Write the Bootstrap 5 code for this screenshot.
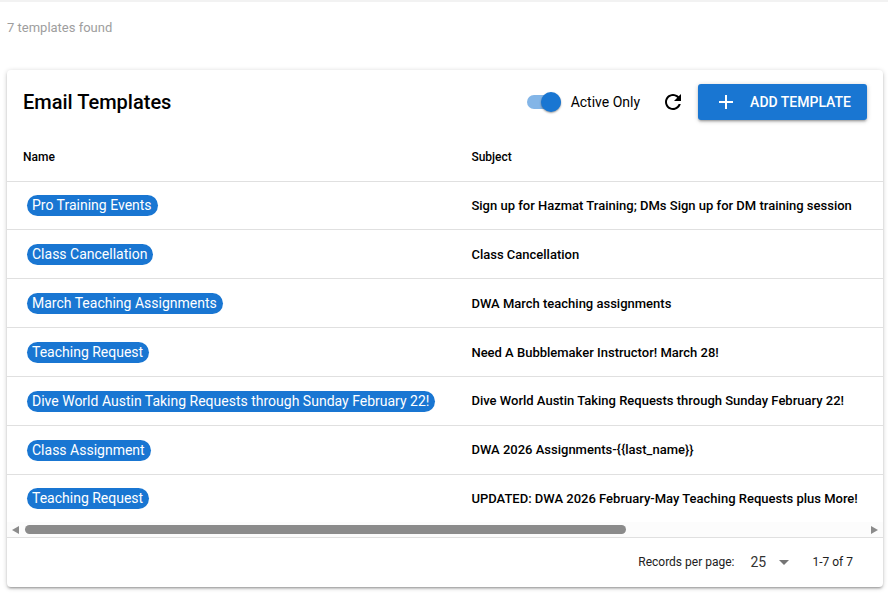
<!DOCTYPE html>
<html lang="en">
<head>
<meta charset="utf-8">
<meta name="viewport" content="width=device-width, initial-scale=1">
<title>Email Templates</title>
<link href="https://cdn.jsdelivr.net/npm/bootstrap@5.3.0/dist/css/bootstrap.min.css" rel="stylesheet">
<style>
:root { --brand: #1976d2; --line: #e0e0e0; }
body { font-family: Roboto, "Liberation Sans", sans-serif; font-size: 14px; line-height: 21px; color: #000; border-top: 2px solid #f2f2f2; }
.found-count { font-size: 13px; line-height: 20px; color: #9e9e9e; padding: 16px 7px 32px; }
.panel { margin: 0 5px 7px 7px; background: #fff; border-radius: 4px; box-shadow: 0 1px 5px rgba(0,0,0,.2), 0 2px 2px rgba(0,0,0,.14), 0 3px 1px -2px rgba(0,0,0,.12); }
.panel-head { padding: 14px 16px; }
.panel-title { font-size: 20px; line-height: 32px; font-weight: 500; }
.active-switch { min-height: 0; margin: 0; padding: 0; gap: 10px; }
.form-switch .switch-input { position: relative; appearance: none; width: 34px; height: 20px; margin: 0; float: none; border: 0; background: none !important; }
.switch-input::before, .switch-input::after { content: ""; position: absolute; background: var(--brand); }
.switch-input::before { left: 0; top: 3px; width: 34px; height: 14px; border-radius: 7px; opacity: .54; }
.switch-input::after { right: 0; top: 0; width: 20px; height: 20px; border-radius: 50%; box-shadow: 0 1px 2px rgba(0,0,0,.4); }
.switch-input:not(:checked)::after { right: 14px; background: #fff; }
.refresh-btn { margin: 0 13px 0 21px; }
.add-btn { --bs-btn-bg: var(--brand); --bs-btn-border-color: var(--brand); height: 36px; padding: 0 16px; gap: 12px; font-size: 14px; font-weight: 500; border: 0; border-radius: 3px; box-shadow: 0 1px 5px rgba(0,0,0,.2), 0 2px 2px rgba(0,0,0,.14), 0 3px 1px -2px rgba(0,0,0,.12); }
.template-table { --bs-table-color: #000; --bs-table-bg: transparent; height: 388px; border-color: var(--line); white-space: nowrap; }
.template-table th, .template-table td { padding: 0 16px; }
.template-table th { font-size: 12px; font-weight: 500; height: 47px; vertical-align: middle; }
.template-table th:first-child { width: 1%; }
.template-table td { font-size: 13px; font-weight: 500; }
.template-table tbody tr:last-child td { border-bottom: 0; }
.chip { display: inline-block; margin: 0 4px; padding: 0 6px 0 5px; border-radius: 11px; background: var(--brand); color: #fff; font-size: 14px; font-weight: 400; line-height: 21px; vertical-align: middle; }
.scroll-strip { height: 15px; padding: 0 5px; background: #fcfcfc; color: #8b8b8b; }
.scroll-track { margin: 0 6px; }
.scroll-thumb { width: 71.6%; height: 9px; border-radius: 5px; background: #8b8b8b; }
.panel-foot { border-top: 1px solid var(--line); min-height: 50px; padding: 0 30px; font-size: 12px; color: #212121; }
.page-size { width: 39px; height: 22px; padding: 0 18px 2px 0; margin: 0 23px 0 16px; border: 0; appearance: none; font-size: 14px; line-height: 20px; color: #333; background: url("data:image/svg+xml,%3Csvg xmlns='http://www.w3.org/2000/svg' viewBox='0 0 10 5'%3E%3Cpath fill='%23757575' d='M0 0h10L5 5z'/%3E%3C/svg%3E") no-repeat right 0 center / 10px 5px; }
</style>
<script src="https://cdn.jsdelivr.net/npm/bootstrap@5.3.0/dist/js/bootstrap.bundle.min.js"></script>
</head>
<body>
<main>
  <div class="found-count">7 templates found</div>
  <section class="panel">
    <header class="panel-head d-flex align-items-center flex-wrap">
      <h1 class="panel-title m-0 me-auto">Email Templates</h1>
      <div class="active-switch form-check form-switch d-flex align-items-center">
        <input class="switch-input form-check-input" type="checkbox" role="switch" id="activeOnly" checked>
        <label for="activeOnly">Active Only</label>
      </div>
      <button class="refresh-btn btn p-0 border-0 d-flex" type="button" aria-label="Refresh">
        <svg width="24" height="24" viewBox="0 0 24 24" fill="#000"><path d="M17.65 6.35C16.2 4.9 14.21 4 12 4c-4.42 0-7.99 3.58-7.99 8s3.57 8 7.99 8c3.73 0 6.84-2.55 7.73-6h-2.08c-.82 2.33-3.04 4-5.65 4-3.31 0-6-2.69-6-6s2.69-6 6-6c1.66 0 3.14.69 4.22 1.78L13 11h7V4l-2.35 2.35z"/></svg>
      </button>
      <button class="add-btn btn btn-primary d-flex align-items-center" type="button">
        <svg width="24" height="24" viewBox="0 0 24 24" fill="#fff"><path d="M19 13h-6v6h-2v-6H5v-2h6V5h2v6h6v2z"/></svg>
        <span>ADD TEMPLATE</span>
      </button>
    </header>
    <table class="template-table table align-middle m-0">
      <thead><tr><th scope="col">Name</th><th scope="col">Subject</th></tr></thead>
      <tbody>
        <tr><td><span class="chip">Pro Training Events</span></td><td>Sign up for Hazmat Training; DMs Sign up for DM training session</td></tr>
        <tr><td><span class="chip">Class Cancellation</span></td><td>Class Cancellation</td></tr>
        <tr><td><span class="chip">March Teaching Assignments</span></td><td>DWA March teaching assignments</td></tr>
        <tr><td><span class="chip">Teaching Request</span></td><td>Need A Bubblemaker Instructor! March 28!</td></tr>
        <tr><td><span class="chip">Dive World Austin Taking Requests through Sunday February 22!</span></td><td>Dive World Austin Taking Requests through Sunday February 22!</td></tr>
        <tr><td><span class="chip">Class Assignment</span></td><td>DWA 2026 Assignments-{{last_name}}</td></tr>
        <tr><td><span class="chip">Teaching Request</span></td><td>UPDATED: DWA 2026 February-May Teaching Requests plus More!</td></tr>
      </tbody>
    </table>
    <div class="scroll-strip d-flex align-items-center" aria-hidden="true">
      <svg width="7" height="8" viewBox="0 0 7 8" fill="currentColor"><path d="M7 0v8L0 4z"/></svg>
      <div class="scroll-track flex-grow-1"><div class="scroll-thumb"></div></div>
      <svg width="7" height="8" viewBox="0 0 7 8" fill="currentColor"><path d="M0 0v8l7-4z"/></svg>
    </div>
    <footer class="panel-foot d-flex align-items-center justify-content-end">
      <label for="pageSize">Records per page:</label>
      <select class="page-size" id="pageSize"><option>10</option><option selected>25</option><option>50</option></select>
      <span>1-7 of 7</span>
    </footer>
  </section>
</main>
</body>
</html>
